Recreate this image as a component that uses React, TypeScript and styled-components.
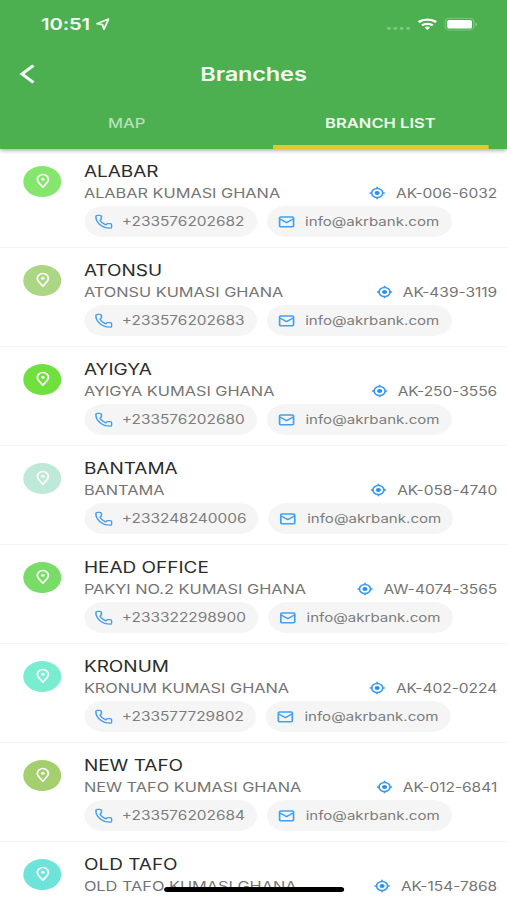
import React from "react";
import styled, { createGlobalStyle } from "styled-components";
import { Phone } from "lucide-react";

const Global = createGlobalStyle`
  body { margin: 0; background: #fff; overflow: hidden; }
  * { box-sizing: border-box; }
`;

const Screen = styled.div`
  width: 414px;
  height: 900px;
  position: relative;
  overflow: hidden;
  display: flex;
  flex-direction: column;
  transform: scaleX(1.22464);
  transform-origin: 0 0;
  background: #fff;
  font-family: Inter, "Liberation Sans", sans-serif;
`;

const Header = styled.header`
  height: 149px;
  flex: none;
  background: #4caf50;
  color: #fff;
  box-shadow: 0 1px 4px rgba(0, 0, 0, 0.4);
  z-index: 1;
`;

const StatusBar = styled.div`
  height: 48px;
  display: flex;
  align-items: center;
  padding: 0 23.5px 0 33.5px;
`;

const Clock = styled.span`
  font-size: 16.5px;
  font-weight: 600;
  letter-spacing: -0.1px;
  margin-right: 4.5px;
  color: #f4fbf4;
`;

const StatusIcons = styled.div`
  margin-left: auto;
  display: flex;
  align-items: center;
`;

const NavBar = styled.div`
  height: 52px;
  display: grid;
  grid-template-columns: 50px 1fr 50px;
  align-items: center;
`;

const BackButton = styled.button`
  border: 0;
  background: none;
  color: inherit;
  padding: 0 0 0 14px;
  display: flex;
`;

const Title = styled.h1`
  margin: 0;
  text-align: center;
  font-size: 19.3px;
  line-height: 24px;
  font-weight: 600;
  letter-spacing: -0.15px;
  color: #f4fbf4;
`;

const Tabs = styled.nav`
  height: 49px;
  display: grid;
  grid-template-columns: 1fr 1fr;
  column-gap: 31.5px;
  padding: 0 15.5px;
`;

const Tab = styled.div<{ $active?: boolean }>`
  height: 49px;
  display: flex;
  align-items: center;
  justify-content: center;
  border-bottom: 4px solid ${(p) => (p.$active ? "#e4c92c" : "transparent")};
  font-size: 13.5px;
  font-weight: ${(p) => (p.$active ? 600 : 500)};
  color: ${(p) => (p.$active ? "#f1faf1" : "#b7dfb9")};
`;

const List = styled.main`
  flex: 1;
`;

const Row = styled.section`
  height: 99px;
  display: flex;
  padding: 12px 8px 0 19px;
  border-bottom: 1px solid #f4f4f4;
`;

const Avatar = styled.div<{ $color: string }>`
  width: 31px;
  height: 31px;
  flex: none;
  margin: 4.5px 18.5px 0 0;
  border-radius: 50%;
  background: ${(p) => p.$color};
  display: flex;
  align-items: center;
  justify-content: center;
`;

const Body = styled.div`
  flex: 1;
  min-width: 0;
  display: flex;
  flex-direction: column;
`;

const Name = styled.div`
  height: 20px;
  font-size: 15.5px;
  line-height: 22px;
  color: #2b2b2b;
  white-space: nowrap;
`;

const AddressLine = styled.div`
  display: flex;
  align-items: center;
  justify-content: space-between;
  height: 24px;
  font-size: 13.35px;
  color: #747474;
  white-space: nowrap;
`;

const Address = styled.span`
  letter-spacing: -0.02px;
`;

const Code = styled.span`
  display: flex;
  align-items: center;
  gap: 8px;
  font-size: 12.65px;
`;

const Pills = styled.div`
  display: flex;
  gap: 8px;
  margin-top: 1px;
`;

const Pill = styled.div<{ $size: number }>`
  height: 31px;
  display: flex;
  align-items: center;
  gap: 7.5px;
  padding: 0 10px 0 8px;
  border-radius: 16px;
  background: #f5f5f5;
  color: #7d7d7d;
  font-size: ${(p) => p.$size}px;
  line-height: 18px;
  white-space: nowrap;
`;

const PillText = styled.span`
  padding-top: 1px;
`;

const HomeIndicator = styled.div`
  position: absolute;
  left: 134px;
  bottom: 8px;
  width: 147px;
  height: 5px;
  border-radius: 3px;
  background: #000;
`;

const PinIcon = () => (
  <svg width="16" height="16" viewBox="0 0 16 16" fill="none" stroke="#fff" strokeWidth="1.5">
    <path d="M8 14.2C6 11.7 3.5 9.2 3.5 6.3a4.5 4.8 0 0 1 9 0C12.5 9.2 10 11.7 8 14.200Z" strokeLinejoin="round" />
    <circle cx="8" cy="6.200" r="1.500" fill="#fff" fillOpacity=".85" stroke="none" />
  </svg>
);

const MailIcon = () => (
  <svg width="16" height="16" viewBox="0 0 16 16" fill="none" stroke="#42a1f2" strokeWidth="1.4" strokeLinejoin="round">
    <rect x="2.3" y="3" width="11.4" height="9.8" rx="1" />
    <path d="M2.6 5 8 8.6 13.4 5" />
  </svg>
);

const TargetIcon = () => (
  <svg width="14" height="14" viewBox="0 0 14 14" fill="none" stroke="#3b9af0" strokeWidth="1.4">
    <circle cx="7" cy="7" r="4.5" />
    <circle cx="7" cy="7" r="2.1" fill="#2a8ff0" stroke="none" />
    <path d="M7 .8v1.8M7 11.4v1.8M.8 7h1.8M11.4 7h1.8" />
  </svg>
);

const BackIcon = () => (
  <svg width="20" height="22" viewBox="0 0 20 22" fill="none" stroke="#f6fcf6" strokeWidth="2.8">
    <path d="M13.3 2.5 4 11l9.3 8.5" />
  </svg>
);

const LocationArrow = () => (
  <svg width="12" height="14" viewBox="0 0 12 14" fill="none" stroke="#e6f5e6" strokeWidth="1.6" strokeLinejoin="round">
    <path d="M10.6 2 1.2 6.8l4.5.8 1.2 4.6Z" />
  </svg>
);

const StatusGlyphs = () => (
  <svg width="75" height="14" viewBox="0 0 75 14">
    <g fill="#82c885">
      <circle cx="1.5" cy="11.3" r="1.5" />
      <circle cx="6.8" cy="11.3" r="1.5" />
      <circle cx="12" cy="11.3" r="1.5" />
      <circle cx="17.3" cy="11.3" r="1.5" />
    </g>
    <g fill="none" stroke="#fff" strokeWidth="2.3">
      <path d="M25.8 5a10.5 9 0 0 1 14.4 0" />
      <path d="M28.6 8.4a6.6 6 0 0 1 8.8 0" />
    </g>
    <path d="M33 13l-2.3-2.6a3.5 3.5 0 0 1 4.6 0Z" fill="#fff" />
    <rect x="47.500" y="1.200" width="23.500" height="11.800" rx="3.5" fill="none" stroke="#7cc57f" />
    <rect x="49.200" y="2.9" width="20.2" height="8.6" rx="1.5" fill="#fff" />
    <path d="M72.300 5.200q2.500 2 0 4Z" fill="#8dcd90" />
  </svg>
);

const branches = [
  { name: "ALABAR", address: "ALABAR KUMASI GHANA", code: "AK-006-6032", phone: "+233576202682", color: "#84e66d" },
  { name: "ATONSU", address: "ATONSU KUMASI GHANA", code: "AK-439-3119", phone: "+233576202683", color: "#abd683" },
  { name: "AYIGYA", address: "AYIGYA KUMASI GHANA", code: "AK-250-3556", phone: "+233576202680", color: "#70e03e" },
  { name: "BANTAMA", address: "BANTAMA", code: "AK-058-4740", phone: "+233248240006", color: "#bee8d8" },
  { name: "HEAD OFFICE", address: "PAKYI NO.2 KUMASI GHANA", code: "AW-4074-3565", phone: "+233322298900", color: "#79dc69" },
  { name: "KRONUM", address: "KRONUM KUMASI GHANA", code: "AK-402-0224", phone: "+233577729802", color: "#7aecd0" },
  { name: "NEW TAFO", address: "NEW TAFO KUMASI GHANA", code: "AK-012-6841", phone: "+233576202684", color: "#a3cf6e" },
  { name: "OLD TAFO", address: "OLD TAFO KUMASI GHANA", code: "AK-154-7868", phone: "", color: "#6ee3da" },
];

export default function App() {
  return (
    <>
      <Global />
      <Screen>
        <Header>
          <StatusBar>
            <Clock>10:51</Clock>
            <LocationArrow />
            <StatusIcons>
              <StatusGlyphs />
            </StatusIcons>
          </StatusBar>
          <NavBar>
            <BackButton aria-label="Back">
              <BackIcon />
            </BackButton>
            <Title>Branches</Title>
          </NavBar>
          <Tabs>
            <Tab>MAP</Tab>
            <Tab $active>BRANCH LIST</Tab>
          </Tabs>
        </Header>
        <List>
          {branches.map((b) => (
            <Row key={b.name}>
              <Avatar $color={b.color}>
                <PinIcon />
              </Avatar>
              <Body>
                <Name>{b.name}</Name>
                <AddressLine>
                  <Address>{b.address}</Address>
                  <Code>
                    <TargetIcon />
                    {b.code}
                  </Code>
                </AddressLine>
                {b.phone && (
                  <Pills>
                    <Pill $size={12.6}>
                      <Phone size={15.5} strokeWidth={2} color="#4a9fea" />
                      <PillText>{b.phone}</PillText>
                    </Pill>
                    <Pill $size={12.3}>
                      <MailIcon />
                      <PillText>info@akrbank.com</PillText>
                    </Pill>
                  </Pills>
                )}
              </Body>
            </Row>
          ))}
        </List>
        <HomeIndicator />
      </Screen>
    </>
  );
}
